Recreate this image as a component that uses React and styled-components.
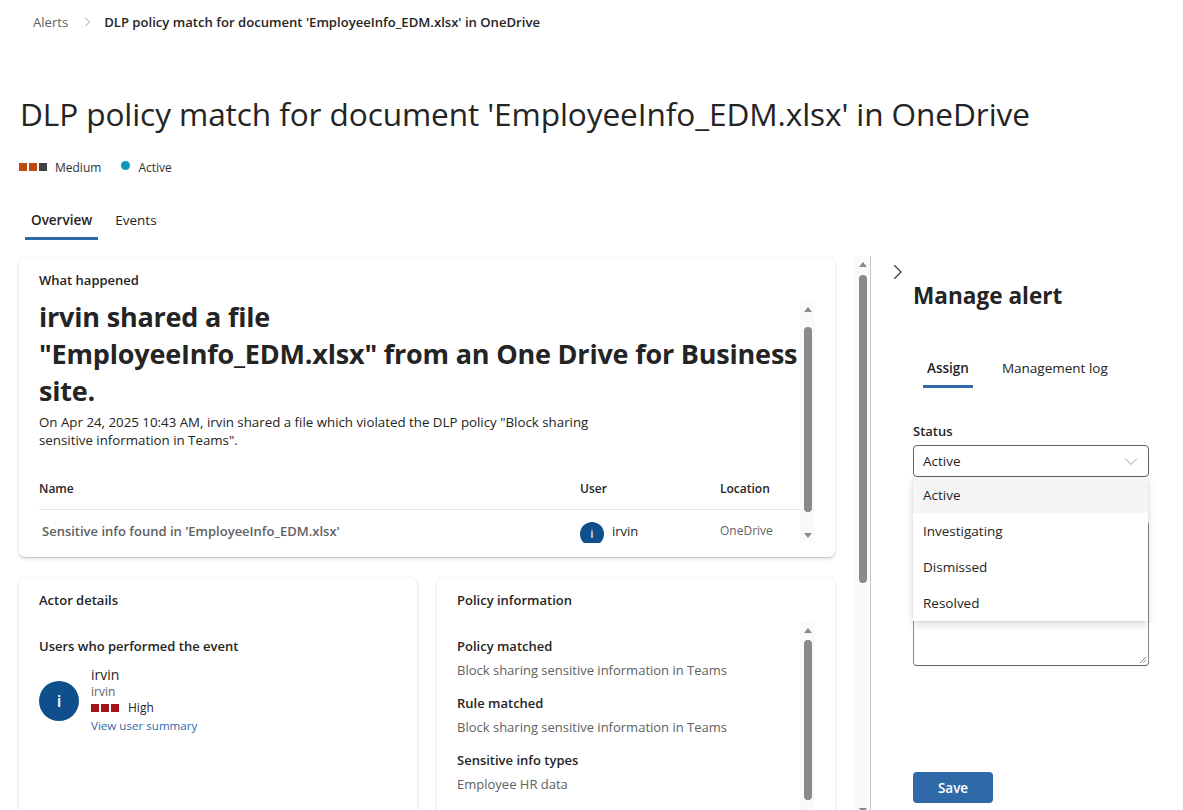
import React from 'react';
import styled, { createGlobalStyle } from 'styled-components';

const GlobalStyle = createGlobalStyle`
  html, body { margin: 0; padding: 0; background: #fff; }
  body {
    font-family: "Segoe UI", "Open Sans", sans-serif;
    color: #242424;
    overflow: hidden;
  }
  * { box-sizing: border-box; }
`;

const Page = styled.div`
  height: 810px;
  display: flex;
  flex-direction: column;
  overflow: hidden;
`;

const Header = styled.header`
  padding-left: 20px;
`;

const Breadcrumb = styled.nav`
  display: flex;
  align-items: center;
  height: 44px;
  padding-left: 13px;
  font-size: 13.1px;
  svg { margin: 0 12px 0 14px; }
`;

const Crumb = styled.span`
  color: ${p => (p.$current ? '#242424' : '#616161')};
  font-weight: ${p => (p.$current ? 600 : 400)};
`;

const Title = styled.h1`
  margin: 50px 0 0;
  font-size: 31.6px;
  line-height: 40px;
  font-weight: 400;
  letter-spacing: -0.1px;
`;

const Meta = styled.div`
  display: flex;
  align-items: center;
  height: 20px;
  margin-top: 23px;
  margin-left: -1px;
  font-size: 12px;
`;

const Severity = styled.span`
  display: inline-flex;
  align-items: center;
  gap: 2px;
  margin-right: 8px;
  i {
    display: block;
    width: 8px;
    height: 8px;
  }
`;

const MetaText = styled.span`
  margin-right: ${p => p.$gap || 0}px;
  color: #323130;
`;

const Dot = styled.span`
  width: 9px;
  height: 9px;
  border-radius: 50%;
  background: #0d99bd;
  margin: -4px 8px 0 0;
`;

const Tabs = styled.div`
  display: flex;
  gap: ${p => p.$gap}px;
  margin: ${p => p.$margin};
`;

const Tab = styled.div`
  padding: 10px ${p => p.$pad}px 7px;
  line-height: 20px;
  font-size: 13.5px;
  font-weight: ${p => (p.$active ? 600 : 400)};
  border-bottom: 3px solid ${p => (p.$active ? '#2f69a8' : 'transparent')};
`;

const Body = styled.div`
  flex: 1;
  display: flex;
  min-height: 0;
  margin-top: 16px;
`;

const Main = styled.div`
  display: flex;
  overflow: hidden;
`;

const Content = styled.div`
  width: 816px;
  margin: 0 20px 0 19px;
  padding-top: 2px;
  display: flex;
  flex-direction: column;
  gap: 21px;
`;

const Card = styled.section`
  background: #fff;
  border-radius: 6px;
  box-shadow: 0 1.6px 3.6px rgba(0, 0, 0, 0.13), 0 0.3px 0.9px rgba(0, 0, 0, 0.11);
  padding: 12px 20px 14px;
  height: ${p => p.$height}px;
  display: flex;
  flex-direction: column;
  flex: none;
`;

const CardTitle = styled.h3`
  margin: 0;
  font-size: 13px;
  line-height: 20px;
  font-weight: 600;
`;

const ScrollBox = styled.div`
  flex: 1;
  min-height: 0;
  display: flex;
  margin-top: ${p => p.$top}px;
`;

const ScrollContent = styled.div`
  flex: 1;
  min-width: 0;
  overflow: hidden;
  padding-top: ${p => p.$pad || 0}px;
`;

const Track = styled.div`
  width: 15px;
  flex: none;
  background: #fafafa;
  display: flex;
  flex-direction: column;
  align-items: center;
  margin-top: ${p => p.$top || 0}px;
  height: ${p => (p.$height ? `${p.$height}px` : 'auto')};
`;

const Arrow = styled.span`
  flex: none;
  height: 16px;
  display: flex;
  align-items: center;
  justify-content: center;
  &::before {
    content: '';
    border-left: 4px solid transparent;
    border-right: 4px solid transparent;
    ${p => (p.$down ? 'border-top' : 'border-bottom')}: 5px solid #8a8a8a;
  }
`;

const Thumb = styled.span`
  flex: none;
  width: 8px;
  height: ${p => p.$height}px;
  margin-top: ${p => p.$top}px;
  border-radius: 4px;
  background: #8a8a8a;
`;

const Spacer = styled.span`
  flex: 1;
`;

const Scrollbar = ({ thumbTop, thumbHeight, top, height }) => (
  <Track $top={top} $height={height}>
    <Arrow />
    <Thumb $top={thumbTop} $height={thumbHeight} />
    <Spacer />
    <Arrow $down />
  </Track>
);

const Headline = styled.h2`
  margin: 0;
  font-size: 27px;
  line-height: 37px;
  font-weight: 700;
  letter-spacing: -0.2px;
`;

const Description = styled.p`
  margin: 4px 0 0;
  max-width: 580px;
  font-size: 13.3px;
  line-height: 18px;
`;

const TableRow = styled.div`
  display: grid;
  grid-template-columns: 541px 140px 1fr;
  align-items: ${p => (p.$head ? 'center' : 'start')};
  height: ${p => (p.$head ? 41 : 44)}px;
  margin-top: ${p => (p.$head ? 20 : 0)}px;
  padding-top: ${p => (p.$head ? 0 : 11)}px;
  border-bottom: ${p => (p.$head ? '1px solid #e6e6e6' : 'none')};
  font-size: ${p => (p.$head ? 12 : 13)}px;
  font-weight: ${p => (p.$head ? 600 : 400)};
  line-height: 20px;
`;

const Cell = styled.span`
  color: ${p => p.$color || '#242424'};
  font-weight: ${p => p.$weight || 'inherit'};
  font-size: ${p => (p.$size ? `${p.$size}px` : 'inherit')};
  padding-left: ${p => p.$indent || 0}px;
  display: flex;
  align-items: flex-start;
  gap: 8px;
`;

const Avatar = styled.span`
  flex: none;
  width: ${p => p.$size}px;
  height: ${p => p.$size}px;
  border-radius: 50%;
  background: #0f4f8b;
  color: #fff;
  font-size: ${p => p.$size * 0.42}px;
  font-weight: 600;
  display: flex;
  align-items: center;
  justify-content: center;
  margin-top: ${p => p.$top || 0}px;
`;

const BottomRow = styled.div`
  display: grid;
  grid-template-columns: 398px 398px;
  gap: 20px;
`;

const Subtitle = styled.h4`
  margin: ${p => p.$top}px 0 0;
  font-size: 13px;
  line-height: 20px;
  font-weight: 600;
`;

const UserBlock = styled.div`
  display: flex;
  align-items: center;
  gap: 12px;
  margin-top: 10px;
`;

const UserInfo = styled.div`
  display: flex;
  flex-direction: column;
`;

const UserLine = styled.span`
  font-size: ${p => p.$size}px;
  line-height: ${p => p.$lh}px;
  color: ${p => p.$color || '#242424'};
  display: flex;
  align-items: center;
  gap: 2px;
  i {
    display: block;
    width: 8px;
    height: 8px;
    background: #a4161a;
  }
  i:last-of-type { margin-right: 7px; }
`;

const InfoValue = styled.div`
  margin-top: 4px;
  font-size: 13px;
  line-height: 20px;
  color: #616161;
`;

const InfoGroup = styled.div`
  margin-bottom: 13px;
`;

const Panel = styled.aside`
  flex: 1;
  border-left: 1px solid #c8c8c8;
  padding: 8px 0 0 18px;
  display: flex;
  flex-direction: column;
`;

const PanelHeading = styled.h2`
  margin: 0 0 0 24px;
  font-size: 22.6px;
  line-height: 32px;
  font-weight: 700;
`;

const PanelBody = styled.div`
  padding-left: 24px;
  width: 260px;
`;

const FieldLabel = styled.div`
  font-size: 13px;
  line-height: 20px;
  font-weight: 600;
  margin-top: ${p => p.$top}px;
`;

const SelectWrap = styled.div`
  position: relative;
  margin-top: 4px;
`;

const Select = styled.div`
  height: 32px;
  border: 1px solid #616161;
  border-radius: 4px;
  padding: 0 10px 0 9px;
  display: flex;
  align-items: center;
  justify-content: space-between;
  font-size: 13.5px;
`;

const Menu = styled.ul`
  position: absolute;
  top: 32px;
  left: 0;
  width: 235px;
  margin: 0;
  padding: 0;
  list-style: none;
  background: #fff;
  border-radius: 0 0 4px 4px;
  box-shadow: 0 4px 8px rgba(0, 0, 0, 0.14), 0 0 2px rgba(0, 0, 0, 0.12);
  z-index: 2;
`;

const Option = styled.li`
  height: 36px;
  padding-left: 10px;
  display: flex;
  align-items: center;
  font-size: 13.5px;
  background: ${p => (p.$selected ? '#f5f5f5' : '#fff')};
`;

const TextArea = styled.div`
  margin-top: 44px;
  height: 145px;
  border: 1px solid #8a8a8a;
  border-bottom-color: #616161;
  border-radius: 4px;
  position: relative;
  svg { position: absolute; right: 1px; bottom: 1px; }
`;

const SaveButton = styled.button`
  display: block;
  margin-top: 106px;
  width: 80px;
  height: 31px;
  border: none;
  border-radius: 4px;
  background: #2f69a8;
  color: #fff;
  font-family: inherit;
  font-size: 13.5px;
  font-weight: 600;
`;

const Chevron = ({ dir = 'right', size = 12, color = '#616161' }) => (
  <svg width={size} height={size} viewBox="0 0 12 12" fill="none">
    {dir === 'right' ? (
      <polyline points="4,1 9,6 4,11" stroke={color} strokeWidth="1" />
    ) : (
      <polyline points="1,4 6,9 11,4" stroke={color} strokeWidth="1" />
    )}
  </svg>
);

const App = () => (
  <Page>
    <GlobalStyle />
    <Header>
      <Breadcrumb>
        <Crumb>Alerts</Crumb>
        <Chevron size={10} color="#8a8a8a" />
        <Crumb $current>DLP policy match for document 'EmployeeInfo_EDM.xlsx' in OneDrive</Crumb>
      </Breadcrumb>
      <Title>DLP policy match for document 'EmployeeInfo_EDM.xlsx' in OneDrive</Title>
      <Meta>
        <Severity>
          <i style={{ background: '#bf4a0d' }} />
          <i style={{ background: '#bf4a0d' }} />
          <i style={{ background: '#404040' }} />
        </Severity>
        <MetaText $gap={20}>Medium</MetaText>
        <Dot />
        <MetaText>Active</MetaText>
      </Meta>
      <Tabs $gap={11} $margin="23px 0 0 5px">
        <Tab $pad={6} $active>Overview</Tab>
        <Tab $pad={6}>Events</Tab>
      </Tabs>
    </Header>

    <Body>
      <Main>
        <Content>
          <Card $height={299}>
            <CardTitle>What happened</CardTitle>
            <ScrollBox $top={6}>
              <ScrollContent $pad={2}>
                <Headline>
                  irvin shared a file
                  <br />
                  "EmployeeInfo_EDM.xlsx" from an One Drive for Business
                  <br />
                  site.
                </Headline>
                <Description>
                  On Apr 24, 2025 10:43 AM, irvin shared a file which violated the DLP policy "Block sharing
                  sensitive information in Teams".
                </Description>
                <TableRow $head>
                  <Cell>Name</Cell>
                  <Cell>User</Cell>
                  <Cell>Location</Cell>
                </TableRow>
                <TableRow>
                  <Cell $indent={3} $weight={600} $color="#616161">
                    Sensitive info found in 'EmployeeInfo_EDM.xlsx'
                  </Cell>
                  <Cell>
                    <Avatar $size={24} $top={1}>i</Avatar>
                    irvin
                  </Cell>
                  <Cell $size={12} $color="#616161">OneDrive</Cell>
                </TableRow>
              </ScrollContent>
              <Scrollbar top={5} thumbTop={10} thumbHeight={185} />
            </ScrollBox>
          </Card>

          <BottomRow>
            <Card $height={280}>
              <CardTitle>Actor details</CardTitle>
              <Subtitle $top={26}>Users who performed the event</Subtitle>
              <UserBlock>
                <Avatar $size={40}>i</Avatar>
                <UserInfo>
                  <UserLine $size={14} $lh={18}>irvin</UserLine>
                  <UserLine $size={12} $lh={16} $color="#616161">irvin</UserLine>
                  <UserLine $size={12} $lh={16}>
                    <i />
                    <i />
                    <i />
                    High
                  </UserLine>
                  <UserLine $size={11.6} $lh={19} $color="#2f69a8">View user summary</UserLine>
                </UserInfo>
              </UserBlock>
            </Card>

            <Card $height={280}>
              <CardTitle>Policy information</CardTitle>
              <ScrollBox $top={12}>
                <ScrollContent $pad={14}>
                  <InfoGroup>
                    <CardTitle>Policy matched</CardTitle>
                    <InfoValue>Block sharing sensitive information in Teams</InfoValue>
                  </InfoGroup>
                  <InfoGroup>
                    <CardTitle>Rule matched</CardTitle>
                    <InfoValue>Block sharing sensitive information in Teams</InfoValue>
                  </InfoGroup>
                  <InfoGroup>
                    <CardTitle>Sensitive info types</CardTitle>
                    <InfoValue>Employee HR data</InfoValue>
                  </InfoGroup>
                </ScrollContent>
                <Scrollbar thumbTop={2} thumbHeight={160} />
              </ScrollBox>
            </Card>
          </BottomRow>
        </Content>
        <Scrollbar height={562} thumbTop={3} thumbHeight={308} />
      </Main>

      <Panel>
        <Chevron size={16} color="#424242" />
        <PanelHeading>Manage alert</PanelHeading>
        <PanelBody>
          <Tabs $gap={25} $margin="36px 0 0 10px">
            <Tab $pad={4} $active>Assign</Tab>
            <Tab $pad={4}>Management log</Tab>
          </Tabs>
          <FieldLabel $top={33}>Status</FieldLabel>
          <SelectWrap>
            <Select>
              Active
              <Chevron dir="down" size={14} color="#c4c4c4" />
            </Select>
            <Menu>
              <Option $selected>Active</Option>
              <Option>Investigating</Option>
              <Option>Dismissed</Option>
              <Option>Resolved</Option>
            </Menu>
          </SelectWrap>
          <TextArea>
            <svg width="8" height="8" viewBox="0 0 8 8">
              <line x1="1" y1="7" x2="7" y2="1" stroke="#8a8a8a" />
              <line x1="4" y1="7" x2="7" y2="4" stroke="#8a8a8a" />
            </svg>
          </TextArea>
          <SaveButton>Save</SaveButton>
        </PanelBody>
      </Panel>
    </Body>
  </Page>
);

export default App;
